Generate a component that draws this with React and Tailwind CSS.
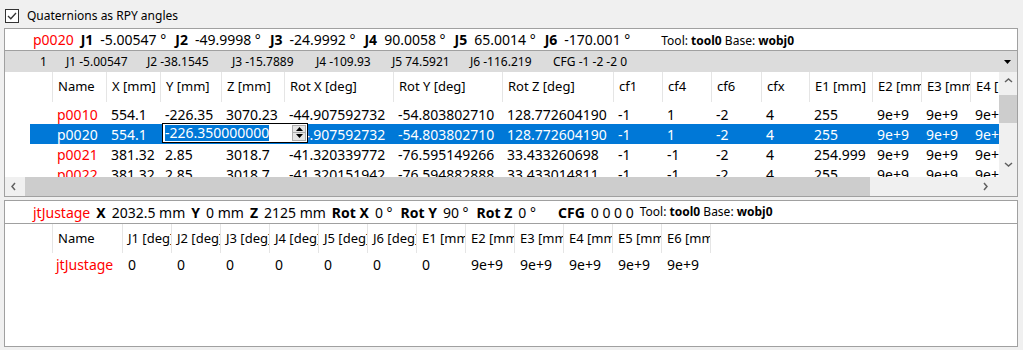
import React from "react";

const topCols = [
  { label: "Name", w: "w-[54px]" },
  { label: "X [mm]", w: "w-[54px]" },
  { label: "Y [mm]", w: "w-[61px]" },
  { label: "Z [mm]", w: "w-[63px]" },
  { label: "Rot X [deg]", w: "w-[109px]" },
  { label: "Rot Y [deg]", w: "w-[109px]" },
  { label: "Rot Z [deg]", w: "w-[111px]" },
  { label: "cf1", w: "w-[49px]" },
  { label: "cf4", w: "w-[49px]" },
  { label: "cf6", w: "w-[50px]" },
  { label: "cfx", w: "w-[48px]" },
  { label: "E1 [mm]", w: "w-[63px]" },
  { label: "E2 [mm]", w: "w-[49px]" },
  { label: "E3 [mm]", w: "w-[49px]" },
  { label: "E4 [mm]", w: "w-[49px]" },
];

const topRows = [
  ["p0010", "554.1", "-226.35", "3070.23", "-44.907592732", "-54.803802710", "128.772604190", "-1", "1", "-2", "4", "255", "9e+9", "9e+9", "9e+9"],
  ["p0020", "554.1", "-226.35", "3070.23", "-44.907592732", "-54.803802710", "128.772604190", "-1", "1", "-2", "4", "255", "9e+9", "9e+9", "9e+9"],
  ["p0021", "381.32", "2.85", "3018.7", "-41.320339772", "-76.595149266", "33.433260698", "-1", "-1", "-2", "4", "254.999", "9e+9", "9e+9", "9e+9"],
  ["p0022", "381.32", "2.85", "3018.7", "-41.320151942", "-76.594882888", "33.433014811", "-1", "-1", "-2", "4", "255", "9e+9", "9e+9", "9e+9"],
];

const bottomCols = [
  { label: "Name", w: "w-[70px]" },
  ...["J1", "J2", "J3", "J4", "J5", "J6"].map((j) => ({ label: `${j} [deg]`, w: "w-[49px]" })),
  ...["E1", "E2", "E3", "E4", "E5", "E6"].map((e) => ({ label: `${e} [mm]`, w: "w-[49px]" })),
];

const bottomRow = ["jtJustage", "0", "0", "0", "0", "0", "0", "0", "9e+9", "9e+9", "9e+9", "9e+9", "9e+9"];

const barItems = [
  { text: "1", w: "w-[26px]" },
  { text: "J1 -5.00547", w: "w-[81px]" },
  { text: "J2 -38.1545", w: "w-[85px]" },
  { text: "J3 -15.7889", w: "w-[84px]" },
  { text: "J4 -109.93", w: "w-[76px]" },
  { text: "J5 74.5921", w: "w-[78px]" },
  { text: "J6 -116.219", w: "w-[83px]" },
  { text: "CFG -1 -2 -2 0", w: "w-[90px]" },
];

const Chevron = ({ dir }) => {
  const pts = {
    left: "5,1 2,4.5 5,8",
    right: "2,1 5,4.5 2,8",
    up: "1,5 4.5,2 8,5",
    down: "1,2 4.5,5 8,2",
  }[dir];
  return (
    <svg width="9" height="9" viewBox="0 0 9 9">
      <polyline points={pts} fill="none" stroke="#606060" strokeWidth="1.5" />
    </svg>
  );
};

// bold label + value, as in the status lines
const Pair = ({ label, value, tight }) => (
  <>
    <span className="font-bold">{label}</span>
    <span className={tight ? "" : "mr-[2px]"}>{value}</span>
  </>
);

const ToolBase = () => (
  <span className="text-[12px]">
    Tool: <span className="font-bold">tool0</span> Base: <span className="font-bold">wobj0</span>
  </span>
);

const SpinBox = () => (
  <div className="absolute left-[1px] top-[-1px] z-10 w-[146px] h-[20px] border border-black bg-white flex items-center">
    <span className="ml-[2px] bg-[#0078d7] text-white leading-[16px]">-226.350000000</span>
    <div className="ml-auto mr-[1px] w-[14px] h-[16px] border border-[#adadad] bg-[#e5e5e5] flex flex-col">
      <div className="flex-1 flex items-center justify-center border-b border-[#adadad]">
        <svg width="7" height="4" viewBox="0 0 7 4">
          <polygon points="0,4 3.5,0 7,4" fill="#000" />
        </svg>
      </div>
      <div className="flex-1 flex items-center justify-center">
        <svg width="7" height="4" viewBox="0 0 7 4">
          <polygon points="0,0 3.5,4 7,0" fill="#000" />
        </svg>
      </div>
    </div>
  </div>
);

const App = () => {
  return (
    <div className="w-[1023px] h-[350px] overflow-hidden bg-[#f0f0f0] text-black font-['Noto_Sans',sans-serif]">
      {/* checkbox */}
      <div className="h-[28px] pt-[4px] pl-[5px] flex items-center gap-[8px]">
        <svg width="14" height="14" viewBox="0 0 14 14">
          <rect x="0.5" y="0.5" width="13" height="13" fill="#fff" stroke="#333" />
          <polyline points="3,7 5.8,9.8 11,4" fill="none" stroke="#333" strokeWidth="1.3" />
        </svg>
        <span className="text-[12px]">Quaternions as RPY angles</span>
      </div>

      {/* robot targets panel */}
      <div className="ml-[4px] w-[1014px] h-[169px] border border-[#a0a0a0] bg-white flex flex-col">
        <div className="h-[22px] shrink-0 border-b border-[#a0a0a0] pl-[28px] flex items-center gap-[7px] text-[14px] whitespace-nowrap">
          <span className="text-[#ff0000]">p0020</span>
          <Pair label="J1" value="-5.00547 °" />
          <Pair label="J2" value="-49.9998 °" />
          <Pair label="J3" value="-24.9992 °" />
          <Pair label="J4" value="90.0058 °" />
          <Pair label="J5" value="65.0014 °" />
          <Pair label="J6" value="-170.001 °" />
          <span className="ml-[22px]">
            <ToolBase />
          </span>
        </div>

        <div className="h-[21px] shrink-0 bg-[#dcdcdc] pl-[35px] flex items-center text-[12px] whitespace-nowrap">
          {barItems.map((b) => (
            <span key={b.text} className={`${b.w} shrink-0`}>
              {b.text}
            </span>
          ))}
          <svg className="ml-auto mr-[6px]" width="7" height="4" viewBox="0 0 7 4">
            <polygon points="0,0 3.5,4 7,0" fill="#000" />
          </svg>
        </div>

        <div className="h-[105px] shrink-0 flex">
          <div className="flex-1 overflow-hidden">
            <div className="h-[32px] flex">
              <div className="w-[48px] h-[30px] shrink-0 border-r border-[#e5e5e5]" />
              {topCols.map((c) => (
                <div
                  key={c.label}
                  className={`${c.w} h-[30px] shrink-0 border-r border-[#e5e5e5] pl-[5px] flex items-center overflow-hidden whitespace-nowrap text-[13px]`}
                >
                  {c.label}
                </div>
              ))}
            </div>
            {topRows.map((r, i) => {
              const sel = i === 1;
              return (
                <div key={i} className="h-[20px] flex text-[14px]">
                  <div className="w-[25px] shrink-0" />
                  <div className={`flex-1 flex items-center ${sel ? "bg-[#0078d7] text-white" : ""}`}>
                    <div className="w-[23px] shrink-0" />
                    {r.map((v, j) => (
                      <div
                        key={j}
                        className={`${topCols[j].w} shrink-0 pl-[4px] whitespace-nowrap relative ${
                          j === 0 && !sel ? "text-[#ff0000]" : ""
                        }`}
                      >
                        {sel && j === 2 ? <SpinBox /> : null}
                        {v}
                      </div>
                    ))}
                  </div>
                </div>
              );
            })}
          </div>
          <div className="w-[18px] shrink-0 bg-[#f0f0f0] flex flex-col">
            <div className="h-[18px] flex items-center justify-center">
              <Chevron dir="up" />
            </div>
            <div className="flex-1">
              <div className="mt-[5px] h-[28px] bg-[#cdcdcd]" />
            </div>
            <div className="h-[18px] flex items-start justify-center pt-[2px]">
              <Chevron dir="down" />
            </div>
          </div>
        </div>

        <div className="h-[19px] shrink-0 flex bg-[#f0f0f0]">
          <div className="w-[18px] flex items-center justify-center">
            <Chevron dir="left" />
          </div>
          <div className="flex-1 flex">
            <div className="ml-[2px] w-[845px] bg-[#cdcdcd]" />
          </div>
          <div className="w-[18px] flex items-center justify-start pl-[2px]">
            <Chevron dir="right" />
          </div>
          <div className="w-[19px]" />
        </div>
      </div>

      {/* tool / base panel */}
      <div className="mt-[3px] ml-[4px] w-[1014px] h-[147px] border border-[#a0a0a0] bg-white flex flex-col">
        <div className="h-[23px] shrink-0 border-b border-[#a0a0a0] pl-[28px] flex items-center gap-[6px] text-[14px] whitespace-nowrap">
          <span className="text-[#ff0000]">jtJustage</span>
          <Pair label="X" value="2032.5 mm" tight />
          <Pair label="Y" value="0 mm" tight />
          <Pair label="Z" value="2125 mm" tight />
          <Pair label="Rot X" value="0 °" />
          <Pair label="Rot Y" value="90 °" />
          <Pair label="Rot Z" value="0 °" />
          <span className="font-bold ml-[14px]">CFG</span>
          <span>0 0 0 0</span>
          <ToolBase />
        </div>

        <div className="h-[30px] flex shrink-0">
          <div className="w-[48px] h-[29px] shrink-0 border-r border-[#e5e5e5]" />
          {bottomCols.map((c) => (
            <div
              key={c.label}
              className={`${c.w} h-[29px] shrink-0 border-r border-[#e5e5e5] pl-[5px] flex items-center overflow-hidden whitespace-nowrap text-[13px]`}
            >
              {c.label}
            </div>
          ))}
        </div>
        <div className="h-[20px] flex items-center text-[14px]">
          <div className="w-[48px] shrink-0" />
          {bottomRow.map((v, j) => (
            <div
              key={j}
              className={`${bottomCols[j].w} shrink-0 whitespace-nowrap ${
                j === 0 ? "pl-[3px] text-[#ff0000]" : "pl-[5px]"
              }`}
            >
              {v}
            </div>
          ))}
        </div>
      </div>
    </div>
  );
};

export default App;
